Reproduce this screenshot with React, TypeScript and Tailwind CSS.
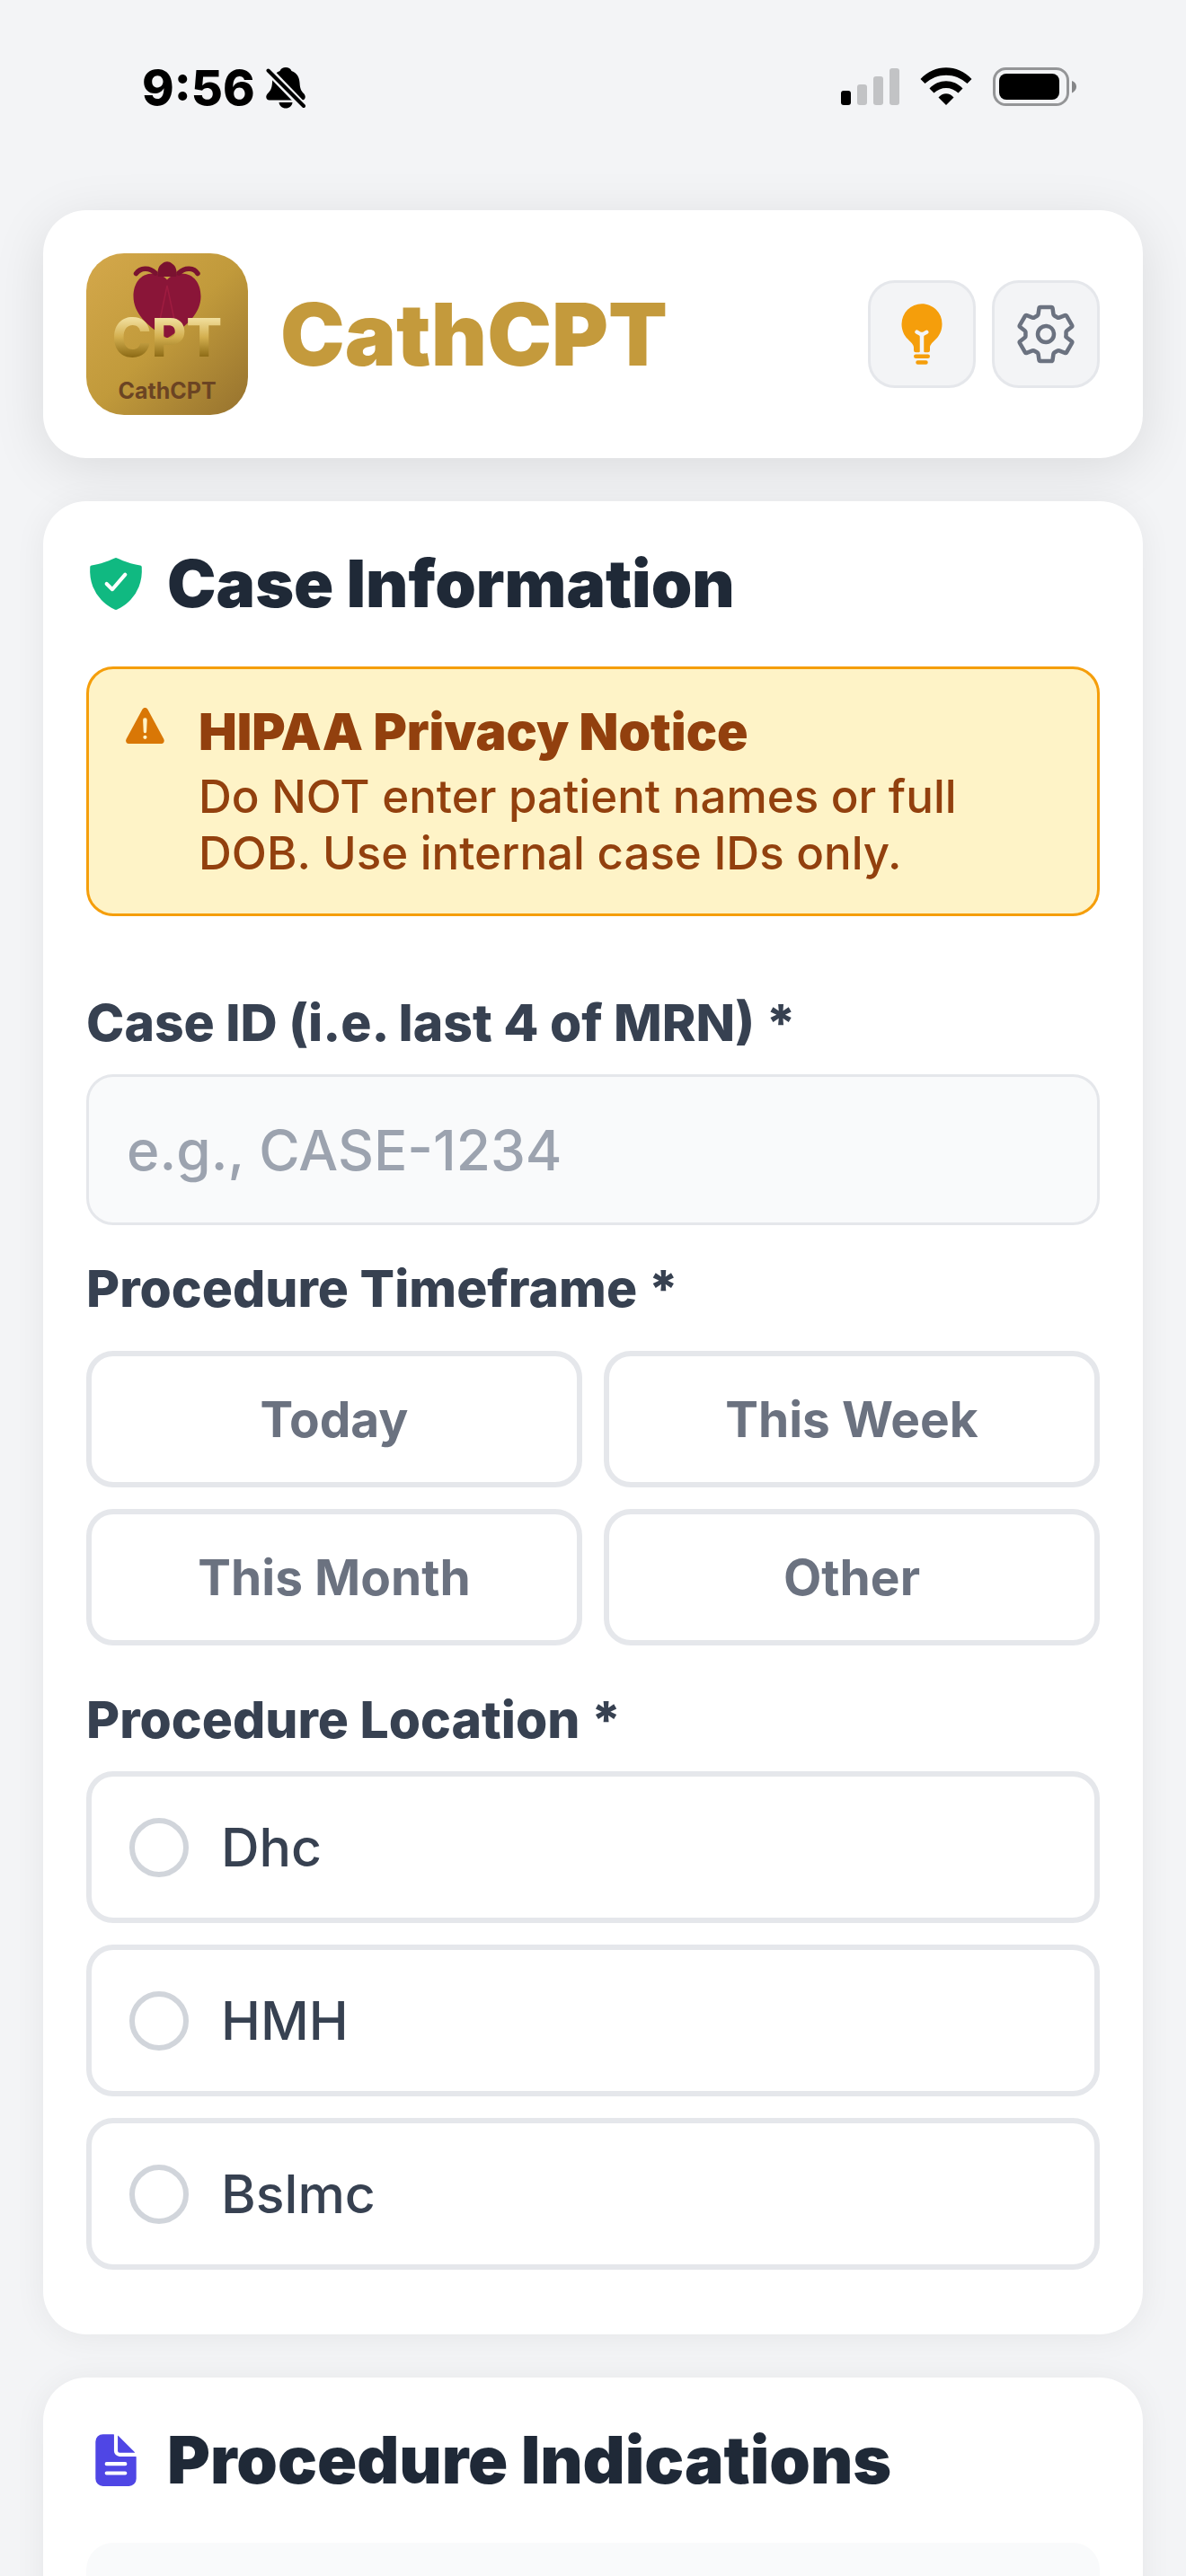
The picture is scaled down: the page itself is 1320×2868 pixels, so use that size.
import { useState, type ReactNode } from "react";
import {
  IoBulb,
  IoDocumentText,
  IoSettingsOutline,
  IoShieldCheckmark,
  IoWarning,
} from "react-icons/io5";

const timeframes = ["Today", "This Week", "This Month", "Other"];
const locations = ["Dhc", "HMH", "Bslmc"];

function BellOff() {
  return (
    <svg viewBox="0 0 44 48" className="h-12 w-11" aria-label="Silent mode">
      <path
        d="M22 1c-3 0-5.500 1.500-6.500 4C9 7.500 7.500 12 7 18c-.5 7-2 9-5 12-3 3.500-2 7.500 2 7.500h36c4 0 5-4 2-7.500-3-3-4-5-4.500-12C37 12 35 7.500 28.500 5 27.500 2.500 25 1 22 1z"
        fill="#000"
      />
      <path d="M14.500 40h15c-.5 4-3.500 6.500-7.500 6.500s-7-2.500-7.500-6.500z" fill="#000" />
      <path d="M1 2.500 44 47" stroke="#f3f4f6" strokeWidth="9" />
      <path d="M2.500 4.500 42 44" stroke="#000" strokeWidth="4" strokeLinecap="round" />
    </svg>
  );
}

function StatusBar() {
  return (
    <div className="flex h-[198px] items-start justify-between pt-[62px] pr-[74px] pl-[110px]">
      <div className="flex h-[72px] items-center gap-3">
        <span className="text-[54px] leading-[72px] font-extrabold text-black">9:56</span>
        <BellOff />
      </div>
      <div className="flex h-[68px] items-center gap-[23px]">
        <svg viewBox="0 0 65 41" className="h-[41px] w-[65px]" aria-label="Signal">
          <rect x="0" y="25" width="11" height="16" rx="3" fill="#000" />
          <rect x="18" y="18" width="11" height="23" rx="3" fill="#c2c3c5" />
          <rect x="36" y="9" width="11" height="32" rx="3" fill="#c2c3c5" />
          <rect x="54" y="0" width="11" height="41" rx="3" fill="#c2c3c5" />
        </svg>
        <svg viewBox="0 0 58 42" className="h-[42px] w-[58px]" aria-label="Wi-Fi">
          <path d="M0.500 13 C16-4 42-4 57.500 13 L52.500 18 C39 5.500 19 5.500 5.500 18z" fill="#000" />
          <path d="M10.500 23.500 C20.500 12.500 37.500 12.500 47.500 23.500 L42.500 28.500 C35 21 23 21 15.500 28.500z" fill="#000" />
          <path d="M20.500 33.500 C25 27.800 33 27.800 37.500 33.500 L29 42z" fill="#000" />
        </svg>
        <svg viewBox="0 0 93 43" className="h-[43px] w-[93px]" aria-label="Battery">
          <rect x="1.500" y="1.500" width="82" height="40" rx="13" fill="none" stroke="#949597" strokeWidth="3" />
          <rect x="7" y="7" width="67" height="29" rx="8" fill="#000" />
          <path d="M88 15c3 1 5 3.500 5 6.500S91 27 88 28.500z" fill="#858688" />
        </svg>
      </div>
    </div>
  );
}

function Logo() {
  return (
    <svg viewBox="0 0 180 180" className="size-[180px] shrink-0" aria-label="CathCPT logo">
      <defs>
        <linearGradient id="plate" x1="0" y1="0" x2="1" y2="1">
          <stop offset="0" stopColor="#d4a84b" />
          <stop offset="0.5" stopColor="#c19a3b" />
          <stop offset="1" stopColor="#96722e" />
        </linearGradient>
        <linearGradient id="letters" gradientUnits="userSpaceOnUse" x1="0" y1="70" x2="0" y2="116">
          <stop offset="0" stopColor="#f4e4a6" />
          <stop offset="0.5" stopColor="#d4b050" />
          <stop offset="1" stopColor="#8b6914" />
        </linearGradient>
      </defs>
      <rect width="180" height="180" rx="42" fill="url(#plate)" />
      <path
        d="M90 29.500C84 23 78 22.500 74 22.500 60 22.500 52.500 34 52.500 48 52.500 66 67 81 90 94.500 113 81 127.500 66 127.500 48 127.500 34 120 22.500 106 22.500 102 22.500 96 23 90 29.500z"
        fill="#8a1538"
      />
      <path d="M82 74 90 36 98 74" fill="none" stroke="#9f1c40" strokeWidth="1.500" />
      <path
        d="M80 26C78.500 21 80 14 84.500 11.500 88 8.500 92 8.500 95.500 11.500 100 14 101.500 21 100 26z"
        fill="#7a1230"
      />
      <path
        d="M55.500 22.500C60 16 70 15 77 22M124 22.500C120 16 110 15 103 22"
        fill="none"
        stroke="#7a1230"
        strokeWidth="5.500"
        strokeLinecap="round"
      />
      <text x="90" y="115" textAnchor="middle" className="text-[59px] font-extrabold" fill="url(#letters)">
        CPT
      </text>
      <text x="90" y="162" textAnchor="middle" className="text-[25px] font-bold" fill="#6b4423">
        CathCPT
      </text>
    </svg>
  );
}

function Card({ icon, title, children }: { icon: ReactNode; title: string; children: ReactNode }) {
  return (
    <section className="rounded-[48px] bg-white px-12 pt-12 pb-[72px] shadow-[0_3px_36px_rgba(0,0,0,0.06)]">
      <h2 className="mb-12 flex items-center gap-6 text-[73px] leading-[88px] font-black text-[#1f2937]">
        {icon}
        {title}
      </h2>
      {children}
    </section>
  );
}

export default function App() {
  const [timeframe, setTimeframe] = useState("");

  return (
    <div className="h-screen overflow-y-auto bg-[#f3f4f6] px-12 pb-12 font-['Inter',sans-serif] [scrollbar-width:none]">
      <StatusBar />
      <main className="mt-9 flex flex-col gap-12">
        <header className="flex items-center rounded-[48px] bg-white p-12 shadow-[0_12px_60px_rgba(0,0,0,0.1)]">
          <Logo />
          <h1 className="ml-9 flex-1 text-[96px] leading-[120px] font-black text-[#c49a3c]">CathCPT</h1>
          <div className="flex gap-[18px]">
            <button
              type="button"
              aria-label="Tips"
              className="flex size-[120px] items-center justify-center rounded-[30px] border-3 border-[#e5e7eb] bg-[#f3f4f6]"
            >
              <IoBulb className="size-[72px] text-[#f59e0b]" />
            </button>
            <button
              type="button"
              aria-label="Settings"
              className="flex size-[120px] items-center justify-center rounded-[30px] border-3 border-[#e5e7eb] bg-[#f3f4f6]"
            >
              <IoSettingsOutline className="size-[72px] text-[#6b7280]" />
            </button>
          </div>
        </header>

        <Card icon={<IoShieldCheckmark className="size-[66px] text-[#10b981]" />} title="Case Information">
          <div className="flex items-start gap-8 rounded-[30px] border-3 border-[#f59e0b] bg-[#fef3c7] p-9 text-[#92400e]">
            <IoWarning className="size-[54px] shrink-0 text-[#d97706]" />
            <div>
              <h3 className="text-[57px] leading-[68px] font-black">HIPAA Privacy Notice</h3>
              <p className="mt-1.5 text-[51px] leading-[63px] font-medium">
                Do NOT enter patient names or full DOB. Use internal case IDs only.
              </p>
            </div>
          </div>

          <label htmlFor="case-id" className="mt-20 block text-[57px] leading-[78px] font-extrabold text-[#374151]">
            Case ID (i.e. last 4 of MRN) *
          </label>
          <input
            id="case-id"
            type="text"
            placeholder="e.g., CASE-1234"
            className="mt-[18px] block h-[168px] w-full rounded-[30px] border-3 border-[#e5e7eb] bg-[#f9fafb] px-[42px] text-[62px] font-medium text-[#1f2937] placeholder:text-[#9ca3af]"
          />

          <fieldset className="mt-8">
            <legend className="text-[57px] leading-[78px] font-extrabold text-[#374151]">Procedure Timeframe *</legend>
            <div className="mt-[30px] grid grid-cols-2 gap-6">
              {timeframes.map((name) => (
                <button
                  key={name}
                  type="button"
                  aria-pressed={timeframe === name}
                  onClick={() => setTimeframe(name)}
                  className="h-[152px] rounded-[30px] border-6 border-[#e5e7eb] bg-white text-[55px] leading-[72px] font-bold text-[#6b7280] aria-pressed:border-[#c49a3c]"
                >
                  {name}
                </button>
              ))}
            </div>
          </fieldset>

          <fieldset className="mt-11">
            <legend className="text-[57px] leading-[78px] font-extrabold text-[#374151]">Procedure Location *</legend>
            <div className="mt-[18px] flex flex-col gap-6">
              {locations.map((name) => (
                <label
                  key={name}
                  className="flex h-[169px] items-center gap-9 rounded-[30px] border-6 border-[#e5e7eb] px-[42px] text-[59px] leading-[72px] font-medium text-[#374151]"
                >
                  <input
                    type="radio"
                    name="location"
                    value={name}
                    className="size-[66px] shrink-0 appearance-none rounded-full border-6 border-[#d1d5db] checked:border-[#c49a3c]"
                  />
                  {name}
                </label>
              ))}
            </div>
          </fieldset>
        </Card>

        <Card icon={<IoDocumentText className="size-[66px] text-[#4f46e5]" />} title="Procedure Indications">
          <div className="h-[168px] rounded-[30px] bg-[#f9fafb]" />
        </Card>
      </main>
    </div>
  );
}
